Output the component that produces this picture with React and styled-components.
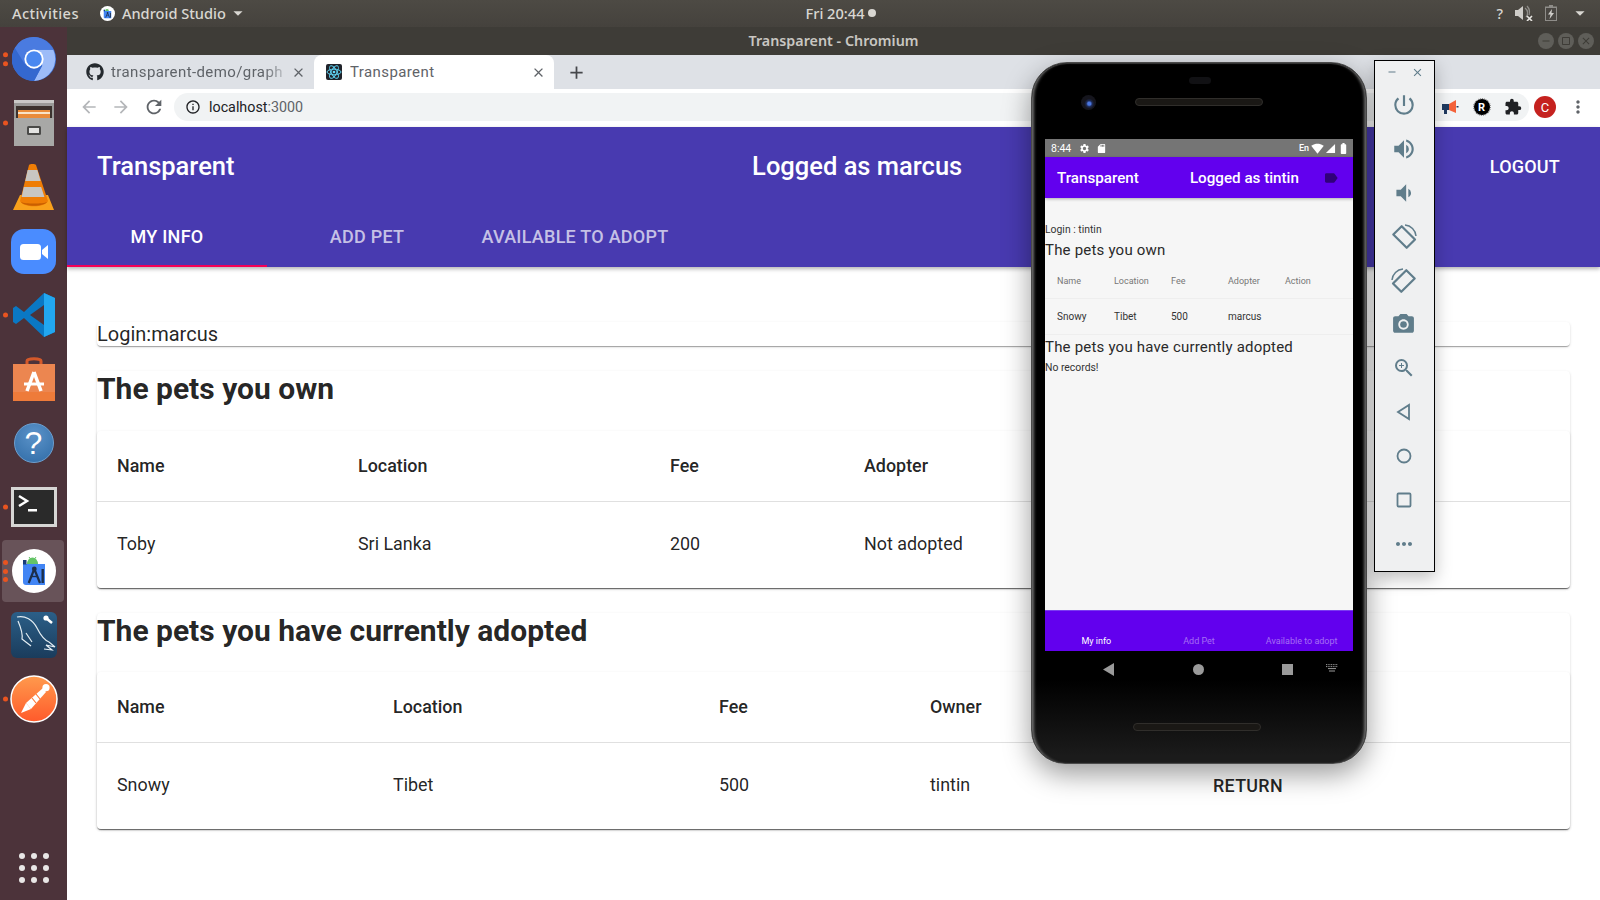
import React from "react";
import styled, { createGlobalStyle } from "styled-components";
import { FaGithub } from "react-icons/fa";
import {
  MdArrowBack, MdArrowForward, MdRefresh, MdInfoOutline, MdMoreVert, MdExtension, MdClose, MdAdd,
  MdPowerSettingsNew, MdVolumeUp, MdVolumeDown, MdPhotoCamera, MdZoomIn, MdMoreHoriz, MdSettings, MdSdCard,
  MdBatteryFull, MdSignalWifi4Bar, MdSignalCellular4Bar, MdLabel, MdRemove, MdArrowDropDown, MdCropSquare,
} from "react-icons/md";

const Global = createGlobalStyle`
  html, body { margin: 0; padding: 0; background: #fff; }
  * { box-sizing: border-box; }
`;

const Desktop = styled.div`
  position: relative; width: 1600px; height: 900px; overflow: hidden;
  display: flex; flex-direction: column; font-family: Roboto, sans-serif;
`;
const TopBar = styled.div`
  height: 27px; flex: none; display: grid; grid-template-columns: 1fr auto 1fr; align-items: center;
  padding: 0 12px 1px; color: #d9d7d2; font: 500 14.6px "Noto Sans", sans-serif;
  background: linear-gradient(#4d4a44, #45423d);
`;
const TopLeft = styled.div` display: flex; align-items: center; `;
const Activities = styled.span` letter-spacing: .4px; `;
const AppMenu = styled.div` display: flex; align-items: center; gap: 7px; margin-left: 21px; `;
const TopCenter = styled.div` display: flex; align-items: center; gap: 4px; margin-left: 82px; `;
const RecDot = styled.span` width: 8px; height: 8px; border-radius: 50%; background: #d9d7d2; `;
const TopRight = styled.div` display: flex; align-items: center; justify-content: flex-end; gap: 12px; margin-right: -3px; `;
const Body = styled.div` flex: 1; display: flex; min-height: 0; `;
const Dock = styled.div` width: 67px; flex: none; display: flex; flex-direction: column; background: #4c333a; `;
const DockItem = styled.div`
  position: relative; height: 64px; flex: none; display: flex; align-items: center; justify-content: center;
  ${p => p.$last && "margin-top: auto;"}
  ${p => p.$active && `&::before { content: ""; position: absolute; left: 2px; right: 3px; top: 1px; bottom: 1px; border-radius: 4px; background: rgba(255,255,255,.16); }`}
  svg { position: relative; }
`;
const RunDots = styled.div`
  position: absolute; left: 2.5px; top: 50%; transform: translateY(-50%);
  display: flex; flex-direction: column; gap: 3.5px;
`;
const RunDot = styled.span` width: 5px; height: 5px; border-radius: 50%; background: #e95420; `;
const Window = styled.div` flex: 1; min-width: 0; display: flex; flex-direction: column; `;
const TitleBar = styled.div`
  position: relative; height: 28px; flex: none; display: flex; align-items: center; justify-content: center;
  background: #3e3c37; color: #c9c7c2; font: 600 14.3px "Noto Sans", sans-serif; padding-bottom: 2px;
`;
const WinButtons = styled.div` position: absolute; right: 6px; top: 6px; display: flex; gap: 4px; `;
const WinButton = styled.span`
  width: 16px; height: 16px; border-radius: 50%; background: #5f5e59; display: flex; align-items: center; justify-content: center;
  color: #3e3c37; font-size: 12px;
`;
const TabStrip = styled.div` height: 34px; flex: none; display: flex; align-items: stretch; background: #dee1e6; color: #5f6368; font: 400 15px Roboto, sans-serif; `;
const Tab = styled.div`
  display: flex; align-items: center; width: ${p => p.$w}px; padding: 0 8px 0 ${p => p.$pad}px; border-radius: 8px 8px 0 0;
  background: ${p => (p.$active ? "#fff" : "transparent")}; letter-spacing: .4px;
`;
const TabTitle = styled.span`
  flex: 1; margin-left: ${p => (p.$fade ? 7 : 8)}px; white-space: nowrap; overflow: hidden;
  ${p => p.$fade && "-webkit-mask-image: linear-gradient(90deg,#000 85%,transparent); mask-image: linear-gradient(90deg,#000 85%,transparent);"}
`;
const NewTab = styled.div` display: flex; align-items: center; margin-left: 12px; color: #45474b; `;
const Toolbar = styled.div` height: 38px; flex: none; display: flex; align-items: center; padding: 0 12px 2px 12px; background: #fff; color: #5f6368; `;
const NavIcons = styled.div` display: flex; align-items: center; gap: 12px; color: #5f6368; `;
const NavIcon = styled.span` display: flex; color: ${p => (p.$off ? "#b4b6b9" : "#5f6368")}; `;
const Omnibox = styled.div`
  margin-left: 9px; flex: 1; height: 28px; border-radius: 14px; background: #f1f3f4; display: flex; align-items: center; padding-left: 11px; gap: 8px;
  font: 400 14.3px Roboto, sans-serif; color: #202124;
`;
const Host = styled.span` color: #202124; `;
const Port = styled.span` color: #5f6368; `;
const Extensions = styled.div` display: flex; align-items: center; gap: 14.5px; margin-left: auto; padding-right: 7px; height: 28px; `;
const Avatar = styled.span`
  width: 22px; height: 22px; border-radius: 50%; background: #c5221f; color: #fff; font: 400 13px Roboto, sans-serif;
  display: flex; align-items: center; justify-content: center; margin: 0 12px 0 5px; flex: none;
`;
const Hero = styled.div` height: 140px; flex: none; background: #483ab0; color: #fff; box-shadow: 0 2px 4px rgba(0,0,0,.3); position: relative; z-index: 1; `;
const AppBar = styled.div` height: 78px; display: flex; align-items: center; justify-content: space-between; padding: 0 30px; `;
const Brand = styled.div` font: 500 25.5px Roboto, sans-serif; `;
const LogoutButton = styled.div` font: 500 18px Roboto, sans-serif; padding: 0 10px; letter-spacing: .2px; `;
const NavTabs = styled.div` height: 62px; display: flex; `;
const NavTab = styled.div`
  width: ${p => p.$w}px; display: flex; align-items: center; justify-content: center; padding-top: 2px;
  font: 500 18px Roboto, sans-serif; letter-spacing: .25px; color: ${p => (p.$active ? "#fff" : "rgba(255,255,255,.7)")};
  border-bottom: 2px solid ${p => (p.$active ? "#f50057" : "transparent")};
`;
const Page = styled.div` flex: 1; background: #fff; padding: 55px 30px 0; display: flex; flex-direction: column; gap: 25px; color: rgba(0,0,0,.87); `;
const Card = styled.div`
  border-radius: 4px; background: #fff;
  box-shadow: 0 2px 1px -1px rgba(0,0,0,.2), 0 1px 1px 0 rgba(0,0,0,.14), 0 1px 3px 0 rgba(0,0,0,.12);
`;
const LoginCard = styled(Card)` height: 24px; font: 400 20px/24px Roboto, sans-serif; `;
const Section = styled(Card)``;
const Heading = styled.h2` margin: 0; height: ${p => p.$h}px; font: 700 30px/36px Roboto, sans-serif; `;
const TableRow = styled.div`
  display: grid; grid-template-columns: ${p => p.$cols}; align-items: center; padding-left: 20px;
  height: ${p => (p.$head ? 71 : 86)}px; font: ${p => (p.$head ? 500 : 400)} 17.9px Roboto, sans-serif;
  ${p => (p.$head ? "border-bottom: 1px solid #e0e0e0; padding-bottom: 1px;" : "padding-bottom: 4px;")}
`;
const ActionLabel = styled.span` font-weight: 500; padding-top: 2px; letter-spacing: .3px; `;

const Phone = styled.div`
  position: absolute; left: 1031px; top: 62px; width: 336px; height: 702px; border-radius: 36px 36px 34px 34px;
  background: linear-gradient(#000 88%, #1b1b1b 99%); border: 1px solid #4a4a4a;
  box-shadow: inset 4px 0 3px -2px #6d6d6d, inset -4px 0 3px -2px #6d6d6d, inset 0 1px 1px #333, 0 10px 28px rgba(0,0,0,.4);
  padding: 76px 13px 0; display: flex; flex-direction: column; z-index: 2;
`;
const Slot = styled.span` position: absolute; left: 157px; top: 14px; width: 22px; height: 7px; border-radius: 4px; background: #111114; `;
const Lens = styled.span` position: absolute; left: 49px; top: 32px; width: 15px; height: 15px; border-radius: 50%; background: radial-gradient(circle at 55% 58%, #4a76e0 0 1.5px, #1d2a55 3px, #15151d 5px); `;
const Grille = styled.span` position: absolute; left: ${p => p.$l}px; top: ${p => p.$t}px; width: 128px; height: 8px; border-radius: 4px; background: #1a1815; border: 1px solid #302e2b; `;
const Screen = styled.div` height: 512px; display: flex; flex-direction: column; background: #f6f6f6; color: #222; flex: none; `;
const StatusBar = styled.div` height: 18px; flex: none; background: #757575; color: #fff; display: flex; align-items: center; padding: 0 3px 0 6px; font: 400 10.5px Roboto, sans-serif; `;
const StatusLeft = styled.div` display: flex; align-items: center; margin-left: 8px; gap: 6px; `;
const StatusRight = styled.div` display: flex; align-items: center; margin-left: auto; gap: 1px; font: 500 9px Roboto, sans-serif; `;
const StatusLang = styled.span` margin-right: 1px; `;
const PhoneBar = styled.div` height: 41px; flex: none; background: #6200ee; color: #fff; display: flex; align-items: center; padding: 0 14px 0 12px; font: 500 15.2px Roboto, sans-serif; box-shadow: 0 1px 3px rgba(0,0,0,.3); `;
const PhoneUser = styled.span` margin-left: 51px; `;
const PhoneTag = styled.span` margin-left: auto; display: flex; color: #30007a; `;
const PhoneBody = styled.div` flex: 1; padding-top: 25px; min-height: 0; `;
const PhoneSmall = styled.div` font: 400 10.4px/14px Roboto, sans-serif; color: #333; margin-top: ${p => p.$t || 0}px; `;
const PhoneHeading = styled.div` font: 400 15px/20px Roboto, sans-serif; letter-spacing: .2px; color: #2a2a2a; margin-top: ${p => p.$t}px; `;
const PhoneRow = styled.div`
  display: grid; grid-template-columns: repeat(5, 57px); align-items: center; padding-left: 12px; height: ${p => p.$h}px;
  font: 400 ${p => (p.$head ? 9 : 10)}px Roboto, sans-serif; color: ${p => (p.$head ? "#777" : "#333")};
  border-bottom: 1px solid #eee; ${p => p.$head && "padding-top: 4px;"}
`;
const PhoneTabs = styled.div` height: 41px; flex: none; background: #6200ee; display: grid; grid-template-columns: repeat(3, 1fr); align-items: end; border-top: 1px solid #7a3cf0; padding: 0 0 5px; `;
const PhoneTab = styled.span` text-align: center; font: 400 9px Roboto, sans-serif; white-space: nowrap; color: ${p => (p.$active ? "#fff" : "#a56ef4")}; `;
const SoftKeys = styled.div` height: 36px; flex: none; display: flex; align-items: center; padding-left: 58px; color: #9a9a9a; `;
const KeyCircle = styled.span` width: 11px; height: 11px; border-radius: 50%; background: #9a9a9a; margin-left: 78px; `;
const KeySquare = styled.span` width: 11px; height: 11px; background: #9a9a9a; margin: 0 33px 0 78px; `;
const SidePanel = styled.div`
  position: absolute; left: 1374px; top: 60px; width: 61px; height: 512px; background: #eff0f1; border: 1px solid #000; z-index: 3; padding-right: 2px;
  box-shadow: 0 6px 16px rgba(0,0,0,.25); color: #607d8b; display: flex; flex-direction: column; align-items: center;
`;
const SideHead = styled.div` height: 22px; width: 100%; flex: none; display: flex; align-items: center; justify-content: space-between; padding: 0 8px 0 11px; `;
const SideBtn = styled.div` height: 43.9px; flex: none; display: flex; align-items: center; justify-content: center; `;

const ChromeIcon = () => (
  <svg width="44" height="44" viewBox="0 0 48 48">
    <circle cx="24" cy="24" r="24" fill="#3f74db" />
    <path d="M24 14H45A24 24 0 0 1 24 48L33 31Z" fill="#9dbcf8" />
    <path d="M24 0A24 24 0 0 0 3 12L13 30 24 14H45A24 24 0 0 0 24 0Z" fill="#4a7be0" />
    <path d="M3 12A24 24 0 0 0 24 48L33 31 15 31Z" fill="#3468cf" />
    <circle cx="24" cy="24" r="10.5" fill="#fff" />
    <circle cx="24" cy="24" r="8.5" fill="#4a88f0" />
  </svg>
);
const FilesIcon = () => (
  <svg width="42" height="46" viewBox="0 0 42 46">
    <rect x="1" y="0" width="40" height="46" rx="2" fill="#9a9a98" />
    <rect x="1" y="0" width="40" height="3" fill="#c9c9c7" />
    <rect x="3" y="6" width="36" height="12" fill="#3b322e" />
    <rect x="5" y="10" width="32" height="8" fill="#e98b3a" />
    <rect x="5" y="12" width="32" height="2" fill="#f8e3c8" />
    <rect x="1" y="18" width="40" height="28" fill="#a8a8a6" />
    <rect x="14" y="26" width="14" height="9" rx="1.5" fill="#4a4a48" />
    <rect x="16" y="28" width="10" height="5" fill="#e3e3e1" />
  </svg>
);
const VlcIcon = () => (
  <svg width="41" height="47" viewBox="0 0 41 47">
    <path d="M7 31L0 46H41L35 31Z" fill="#f9a11b" />
    <path d="M16 1C17-.3 22-.3 23 1L35 37C32 44 10 44 7 37Z" fill="#ef7d05" />
    <path d="M14.6 6H24.4L27.6 17H12.2Z" fill="#c8c6c2" />
    <path d="M10.8 23H28.2L31.4 33H8.6Z" fill="#c8c6c2" />
    <path d="M8 38C12 43 30 43 34 38C30 40 12 40 8 38Z" fill="#c95f00" />
  </svg>
);
const ZoomIcon = () => (
  <svg width="45" height="45" viewBox="0 0 45 45">
    <rect width="45" height="45" rx="13" fill="#4a8cff" />
    <rect x="9" y="15" width="21" height="16" rx="3.5" fill="#fff" />
    <path d="M31 21L37 16V30L31 25Z" fill="#fff" />
  </svg>
);
const CodeIcon = () => (
  <svg width="42" height="44" viewBox="0 0 42 44">
    <path d="M42 5L31 0 11 19 3 13 0 15V29L3 31 11 25 31 44 42 39Z" fill="#0a78c4" />
    <path d="M31 0L42 5V39L31 44Z" fill="#22a7f0" />
    <path d="M31 12L17 22 31 32Z" fill="#4c333a" />
  </svg>
);
const BagIcon = () => (
  <svg width="42" height="44" viewBox="0 0 42 44">
    <path d="M14 10V4C14 1 28 1 28 4V10" fill="none" stroke="#d4592a" strokeWidth="3" />
    <path d="M0 7H42V44H0Z" fill="#ee7b3a" />
    <path d="M0 7H42V35H0Z" fill="#ec8650" />
    <path d="M21 15L14 34M21 15L28 34" stroke="#fff" strokeWidth="3.5" fill="none" />
    <path d="M11 27H31" stroke="#fff" strokeWidth="3" />
  </svg>
);
const HelpIcon = styled.div`
  width: 40px; height: 40px; border-radius: 50%; background: radial-gradient(circle at 50% 30%, #5b93c9, #2f6ba6);
  border: 1px solid #6da0d0; color: #fff; display: flex; align-items: center; justify-content: center; font: 400 32px "Liberation Sans", sans-serif;
`;
const TerminalIcon = () => (
  <svg width="46" height="40" viewBox="0 0 46 40">
    <rect width="46" height="40" fill="#d6d6d4" />
    <rect x="3" y="3" width="40" height="34" fill="#2a2a2a" />
    <path d="M8 9L16 14 8 19" fill="none" stroke="#fff" strokeWidth="2.5" />
    <rect x="17" y="22" width="9" height="2.5" fill="#fff" />
  </svg>
);
const StudioIcon = ({ size = 44 }) => (
  <svg width={size} height={size} viewBox="0 0 44 44">
    <circle cx="22" cy="22" r="22" fill="#fff" />
    <path d="M15 15a5.5 6.5 0 0 1 11 0Z" fill="#64c466" />
    <path d="M17 8L18.5 10M24 8L22.5 10" stroke="#64c466" strokeWidth="1" />
    <path d="M11 11H14V15H33V36H14C12 36 11 35 11 33Z" fill="#4285f4" />
    <rect x="11" y="11" width="3.5" height="4.5" fill="#173c78" />
    <path d="M22.3 20L16.7 34M22.3 20L28 34" stroke="#1c2f4a" strokeWidth="2.2" fill="none" />
    <circle cx="22.3" cy="20" r="2.4" fill="#1c2f4a" />
    <path d="M19 27.5H26" stroke="#1c2f4a" strokeWidth="1.4" />
    <rect x="29.5" y="20" width="2.4" height="14" fill="#1c2f4a" />
  </svg>
);
const MysqlIcon = () => (
  <svg width="46" height="46" viewBox="0 0 46 46">
    <defs><linearGradient id="ms" x1="0" y1="0" x2="0" y2="1"><stop offset="0" stopColor="#2b5f88" /><stop offset="1" stopColor="#1a3c5c" /></linearGradient></defs>
    <rect width="46" height="46" rx="6" fill="url(#ms)" />
    <path d="M6 5C14 3 22 8 26 16 29 22 33 28 38 30L44 35 35 33 41 38 33 37M7 9C10 16 12 22 11 27L20 34M15 21L21 30" fill="none" stroke="#e3edf3" strokeWidth="1.2" />
    <path d="M35 6L41 11" stroke="#fff" strokeWidth="2.6" />
    <circle cx="35" cy="6" r="2.6" fill="#fff" />
  </svg>
);
const PostmanIcon = () => (
  <svg width="48" height="48" viewBox="0 0 48 48">
    <defs><linearGradient id="pm" x1="0" y1="0" x2="0" y2="1"><stop offset="0" stopColor="#ff9a4d" /><stop offset="1" stopColor="#ff5a2b" /></linearGradient></defs>
    <circle cx="24" cy="24" r="23" fill="url(#pm)" stroke="#fff" strokeWidth="1.5" />
    <circle cx="36" cy="12.7" r="3.6" fill="#fff" />
    <path d="M33 13L36 17 21 34 16 28Z" fill="#fff" />
    <path d="M16 28L21 34 11 38Z" fill="#fff" />
    <path d="M22 23L26 28M26 19L30 24" stroke="#ff7a3a" strokeWidth="1.2" />
  </svg>
);
const AppGrid = () => (
  <svg width="32" height="32" viewBox="0 0 32 32" fill="#e9e7e6">
    {[4, 16, 28].flatMap(y => [4, 16, 28].map(x => <circle key={`${x}-${y}`} cx={x} cy={y} r="3" />))}
  </svg>
);
const ReactLogo = () => (
  <svg width="16" height="16" viewBox="0 0 16 16">
    <rect width="16" height="16" rx="2" fill="#20232a" />
    <g fill="none" stroke="#61dafb" strokeWidth=".9">
      <ellipse cx="8" cy="8" rx="7" ry="2.8" />
      <ellipse cx="8" cy="8" rx="7" ry="2.8" transform="rotate(60 8 8)" />
      <ellipse cx="8" cy="8" rx="7" ry="2.8" transform="rotate(120 8 8)" />
    </g>
    <circle cx="8" cy="8" r="1.3" fill="#61dafb" />
  </svg>
);
const Megaphone = () => (
  <svg width="18" height="18" viewBox="0 0 18 18">
    <path d="M1 6H8V12H6V16H3V12H1Z" fill="#1f3a5f" />
    <path d="M8 6L15 2V15L8 12Z" fill="#f4623a" />
    <rect x="15.5" y="8" width="2" height="1.5" fill="#1f3a5f" />
  </svg>
);
const RBadge = styled.span`
  width: 16px; height: 16px; border-radius: 50%; background: #000; outline: 1px dotted #777; color: #fff; font: 700 11px Roboto, sans-serif;
  display: flex; align-items: center; justify-content: center; flex: none;
`;
const RotateIcon = ({ flip }) => (
  <svg width="26" height="26" viewBox="0 0 26 26" fill="none" stroke="currentColor" strokeWidth="2.2" strokeLinejoin="round" style={flip ? { transform: "scaleX(-1)" } : undefined}>
    <path d="M2.3 10.5L10.7 2.2 24 15.5 15.7 23.8Z" />
    <path d="M14 1A12 12 0 0 1 25 12" strokeWidth="1.5" />
  </svg>
);
const BackOutline = () => (
  <svg width="18" height="18" viewBox="0 0 18 18" fill="none" stroke="currentColor" strokeWidth="1.8"><path d="M14 2V16L3 9Z" /></svg>
);
const CircleOutline = () => (
  <svg width="18" height="18" viewBox="0 0 18 18" fill="none" stroke="currentColor" strokeWidth="1.8"><circle cx="9" cy="9" r="6.5" /></svg>
);
const SquareOutline = () => (
  <svg width="18" height="18" viewBox="0 0 18 18" fill="none" stroke="currentColor" strokeWidth="1.8"><rect x="2.5" y="2.5" width="13" height="13" rx="1" /></svg>
);
const SoftBack = () => (
  <svg width="12" height="13" viewBox="0 0 12 13" fill="#9a9a9a"><path d="M11 0V13L0 6.5Z" /></svg>
);
const Keyboard = () => (
  <svg width="12" height="8" viewBox="0 0 12 8" stroke="#9a9a9a" fill="none" style={{ marginTop: -2 }}>
    <path d="M0 .6H12M0 2.6H12" strokeDasharray="1 .7" />
    <path d="M2 4.6H10" />
    <path d="M3 7H9" />
  </svg>
);
const MutedSpeaker = () => (
  <svg width="18" height="16" viewBox="0 0 18 16" fill="#cfcdc9">
    <path d="M0 5H3L8 1V15L3 11H0Z" />
    <path d="M10 3A6 6 0 0 1 11 12M12 1A9 9 0 0 1 14 10" fill="none" stroke="#8f8d89" strokeWidth="1.3" />
    <path d="M12 11L17 16M17 11L12 16" stroke="#e6e4e0" strokeWidth="1.6" />
  </svg>
);
const Battery = () => (
  <svg width="12" height="16" viewBox="0 0 12 16">
    <path d="M4 0H8V1.5H12V16H0V1.5H4Z" fill="#8f8d89" />
    <path d="M1 3H11V15H1Z" fill="#4a4743" />
    <path d="M7 4L3 9.5H5.5L4.5 14 9 8H6.5Z" fill="#cfcdc9" />
  </svg>
);

const runDots = n => (
  <RunDots>{Array.from({ length: n }, (_, i) => <RunDot key={i} />)}</RunDots>
);

const dockApps = [
  { icon: <ChromeIcon />, run: 2 },
  { icon: <FilesIcon />, run: 1 },
  { icon: <VlcIcon /> },
  { icon: <ZoomIcon /> },
  { icon: <CodeIcon />, run: 1 },
  { icon: <BagIcon /> },
  { icon: <HelpIcon>?</HelpIcon> },
  { icon: <TerminalIcon />, run: 1 },
  { icon: <StudioIcon />, run: 3, active: true },
  { icon: <MysqlIcon /> },
  { icon: <PostmanIcon />, run: 1 },
];

const ownCols = "241px 312px 194px 1fr";
const adoptedCols = "276px 326px 211px 283px 1fr";

export default function App() {
  return (
    <Desktop>
      <Global />
      <TopBar>
        <TopLeft>
          <Activities>Activities</Activities>
          <AppMenu>
            <StudioIcon size={15} />
            Android Studio
            <MdArrowDropDown size={22} style={{ marginLeft: -6 }} />
          </AppMenu>
        </TopLeft>
        <TopCenter>Fri 20:44 <RecDot /></TopCenter>
        <TopRight>
          <span>?</span>
          <MutedSpeaker />
          <Battery />
          <MdArrowDropDown size={22} />
        </TopRight>
      </TopBar>
      <Body>
        <Dock>
          {dockApps.map((a, i) => (
            <DockItem key={i} $active={a.active}>
              {a.run ? runDots(a.run) : null}
              {a.icon}
            </DockItem>
          ))}
          <DockItem $last><AppGrid /></DockItem>
        </Dock>
        <Window>
          <TitleBar>
            Transparent - Chromium
            <WinButtons>
              <WinButton><MdRemove /></WinButton>
              <WinButton><MdCropSquare /></WinButton>
              <WinButton><MdClose /></WinButton>
            </WinButtons>
          </TitleBar>
          <TabStrip>
            <Tab $w={247} $pad={19}>
              <FaGithub size={18} color="#24292e" />
              <TabTitle $fade>transparent-demo/graph</TabTitle>
              <MdClose size={15} />
            </Tab>
            <Tab $w={240} $pad={12} $active>
              <ReactLogo />
              <TabTitle>Transparent</TabTitle>
              <MdClose size={15} />
            </Tab>
            <NewTab><MdAdd size={21} /></NewTab>
          </TabStrip>
          <Toolbar>
            <NavIcons>
              <NavIcon $off><MdArrowBack size={20} /></NavIcon>
              <NavIcon $off><MdArrowForward size={20} /></NavIcon>
              <NavIcon><MdRefresh size={22} /></NavIcon>
            </NavIcons>
            <Omnibox>
              <MdInfoOutline size={16} />
              <span><Host>localhost</Host><Port>:3000</Port></span>
              <Extensions>
                <Megaphone />
                <RBadge>R</RBadge>
                <MdExtension size={18} />
              </Extensions>
            </Omnibox>
            <Avatar>C</Avatar>
            <MdMoreVert size={20} />
          </Toolbar>
          <Hero>
            <AppBar>
              <Brand>Transparent</Brand>
              <Brand>Logged as marcus</Brand>
              <LogoutButton>LOGOUT</LogoutButton>
            </AppBar>
            <NavTabs>
              <NavTab $w={200} $active>MY INFO</NavTab>
              <NavTab $w={200}>ADD PET</NavTab>
              <NavTab $w={216}>AVAILABLE TO ADOPT</NavTab>
            </NavTabs>
          </Hero>
          <Page>
            <LoginCard>Login:marcus</LoginCard>
            <Section>
              <Heading $h={60}>The pets you own</Heading>
              <Card>
                <TableRow $head $cols={ownCols}><span>Name</span><span>Location</span><span>Fee</span><span>Adopter</span></TableRow>
                <TableRow $cols={ownCols}><span>Toby</span><span>Sri Lanka</span><span>200</span><span>Not adopted</span></TableRow>
              </Card>
            </Section>
            <Section>
              <Heading $h={59}>The pets you have currently adopted</Heading>
              <Card>
                <TableRow $head $cols={adoptedCols}><span>Name</span><span>Location</span><span>Fee</span><span>Owner</span></TableRow>
                <TableRow $cols={adoptedCols}><span>Snowy</span><span>Tibet</span><span>500</span><span>tintin</span><ActionLabel>RETURN</ActionLabel></TableRow>
              </Card>
            </Section>
          </Page>
        </Window>
      </Body>
      <Phone>
        <Slot />
        <Lens />
        <Grille $l={103} $t={35} />
        <Grille $l={101} $t={660} />
        <Screen>
          <StatusBar>
            8:44
            <StatusLeft><MdSettings size={11} /><MdSdCard size={11} /></StatusLeft>
            <StatusRight><StatusLang>En</StatusLang><MdSignalWifi4Bar size={13} /><MdSignalCellular4Bar size={11} /><MdBatteryFull size={13} /></StatusRight>
          </StatusBar>
          <PhoneBar>
            Transparent
            <PhoneUser>Logged as tintin</PhoneUser>
            <PhoneTag><MdLabel size={16} /></PhoneTag>
          </PhoneBar>
          <PhoneBody>
            <PhoneSmall>Login : tintin</PhoneSmall>
            <PhoneHeading $t={3}>The pets you own</PhoneHeading>
            <PhoneRow $head $h={39}><span>Name</span><span>Location</span><span>Fee</span><span>Adopter</span><span>Action</span></PhoneRow>
            <PhoneRow $h={36}><span>Snowy</span><span>Tibet</span><span>500</span><span>marcus</span><span /></PhoneRow>
            <PhoneHeading $t={2}>The pets you have currently adopted</PhoneHeading>
            <PhoneSmall $t={4}>No records!</PhoneSmall>
          </PhoneBody>
          <PhoneTabs>
            <PhoneTab $active>My info</PhoneTab>
            <PhoneTab>Add Pet</PhoneTab>
            <PhoneTab>Available to adopt</PhoneTab>
          </PhoneTabs>
        </Screen>
        <SoftKeys>
          <SoftBack />
          <KeyCircle />
          <KeySquare />
          <Keyboard />
        </SoftKeys>
      </Phone>
      <SidePanel>
        <SideHead><MdRemove size={12} /><MdClose size={13} /></SideHead>
        <SideBtn><MdPowerSettingsNew size={26} /></SideBtn>
        <SideBtn><MdVolumeUp size={26} /></SideBtn>
        <SideBtn><MdVolumeDown size={26} /></SideBtn>
        <SideBtn><RotateIcon /></SideBtn>
        <SideBtn><RotateIcon flip /></SideBtn>
        <SideBtn><MdPhotoCamera size={25} /></SideBtn>
        <SideBtn><MdZoomIn size={24} /></SideBtn>
        <SideBtn><BackOutline /></SideBtn>
        <SideBtn><CircleOutline /></SideBtn>
        <SideBtn><SquareOutline /></SideBtn>
        <SideBtn><MdMoreHoriz size={24} /></SideBtn>
      </SidePanel>
    </Desktop>
  );
}
